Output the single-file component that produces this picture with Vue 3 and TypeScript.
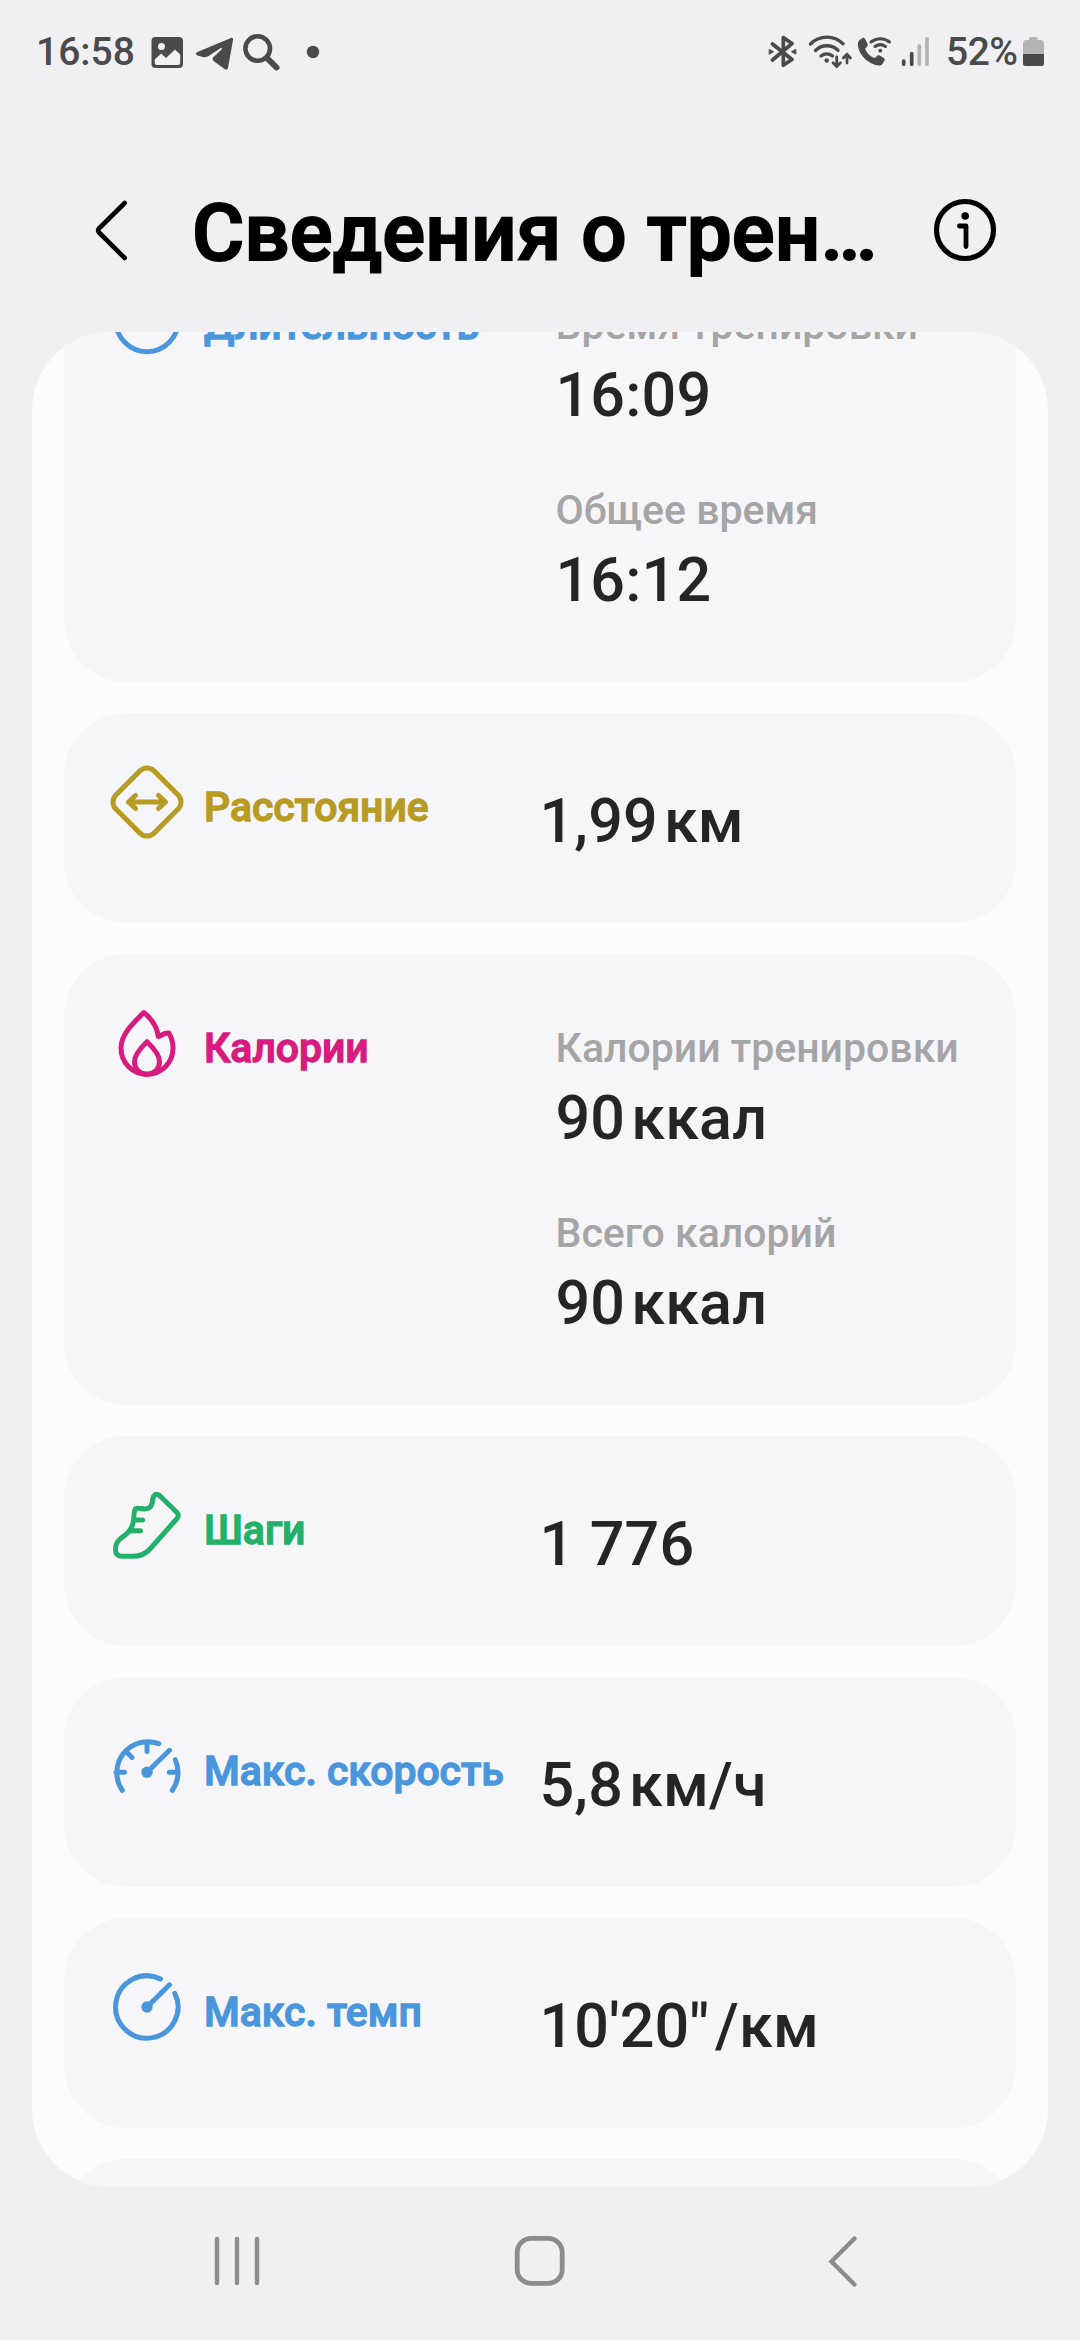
<script setup lang="ts">
type IconName = 'clock' | 'distance' | 'flame' | 'shoe' | 'speed' | 'pace'

interface Metric {
  caption?: string
  value: string
  unit?: string
}

interface Card {
  icon: IconName
  tone: string
  label: string
  metrics: Metric[]
}

const cards: Card[] = [
  {
    icon: 'clock',
    tone: 'blue',
    label: 'Длительность',
    metrics: [
      { caption: 'Время тренировки', value: '16:09' },
      { caption: 'Общее время', value: '16:12' },
    ],
  },
  { icon: 'distance', tone: 'gold', label: 'Расстояние', metrics: [{ value: '1,99', unit: 'км' }] },
  {
    icon: 'flame',
    tone: 'pink',
    label: 'Калории',
    metrics: [
      { caption: 'Калории тренировки', value: '90', unit: 'ккал' },
      { caption: 'Всего калорий', value: '90', unit: 'ккал' },
    ],
  },
  { icon: 'shoe', tone: 'green', label: 'Шаги', metrics: [{ value: '1 776' }] },
  { icon: 'speed', tone: 'blue', label: 'Макс. скорость', metrics: [{ value: '5,8', unit: 'км/ч' }] },
  { icon: 'pace', tone: 'blue', label: 'Макс. темп', metrics: [{ value: '10\'20"', unit: '/км' }] },
]
</script>

<template>
  <div class="screen">
    <div class="status">
      <span class="time">16:58</span>
      <svg width="42" height="50" viewBox="148 27 42 50">
        <path fill="#4a4a4c" fill-rule="evenodd" d="M155.500 37H179a4 4 0 0 1 4 4V64a4 4 0 0 1-4 4H155.500a4 4 0 0 1-4-4V41a4 4 0 0 1 4-4Z" />
        <circle cx="161.500" cy="46.500" r="3.500" fill="#f1f1f3" />
        <path fill="#f1f1f3" d="M154.700 59.500 161.200 53.500 166 58 175 49.500 180.200 54.500V62.500a2.500 2.500 0 0 1-2.500 2.500H157.200a2.500 2.500 0 0 1-2.500-2.500Z" />
      </svg>
      <svg width="50" height="50" viewBox="190 27 50 50">
        <path fill="#4a4a4c" d="M231 38 198 51.800c-2.700 1.200-2.600 2.700-.3 3.600l5 1.500c2 .5 4 .4 6-.8L220 48.500c2-1.200 2.600 0 1.300 1.200L213.500 57c-1.300 1.300-1.200 3 .4 4.200L224.500 69c1.800 1.200 3.200.5 3.600-1.500L233 40c.3-1.700-.6-2.500-2-2Z" />
      </svg>
      <svg width="42" height="50" viewBox="240 27 42 50" fill="none" stroke="#4a4a4c" stroke-linecap="round">
        <circle cx="257.700" cy="48.500" r="12.300" stroke-width="4.600" />
        <path stroke-width="6" d="m267.500 58.500 9 9" />
      </svg>
      <svg width="44" height="50" viewBox="282 27 44 50"><circle cx="313" cy="52" r="6.200" fill="#4a4a4c" /></svg>
      <span class="grow"></span>
      <svg width="36" height="50" viewBox="765 27 36 50" fill="none" stroke="#4a4a4c" stroke-width="3.700" stroke-linejoin="round" stroke-linecap="round">
        <path d="M772.500 44 792 59.500 783.300 65.300V37.500L792 43.500 772.500 60" />
        <path fill="#4a4a4c" stroke-width="1" d="M769.500 49.500 773.500 51.700 769.500 54ZM795.500 49.500 791.500 51.700 795.500 54Z" />
      </svg>
      <svg width="54" height="50" viewBox="801 27 54 50" fill="none" stroke="#4a4a4c" stroke-width="3.400" stroke-linecap="round">
        <path d="M810.500 44A23 23 0 0 1 843 43.700M815.500 50.500A16 16 0 0 1 838 50.300M821 56A9 9 0 0 1 832.500 56" />
        <circle cx="826.700" cy="60.500" r="2.200" fill="#4a4a4c" stroke="none" />
        <path stroke-width="2.800" d="M836.700 57V66M833 62.800 836.700 66.500 840.400 62.800M847 63V54.500M843.300 58 847 54.300 850.400 58" />
      </svg>
      <svg width="40" height="50" viewBox="855 27 40 50" fill="none" stroke="#4a4a4c" stroke-linecap="round">
        <path fill="#4a4a4c" stroke="none" d="M859 40.500 862.500 38c1-.6 2-.3 2.500.7l2.500 5c.5 1 .3 2-.4 2.800l-2 2c1 4 5.500 8.500 9.700 9.500l2.200-2c.8-.8 1.700-.9 2.700-.4l4 2.300c1 .6 1.300 1.500.8 2.500l-2 3.600c-1 1.500-2.500 1.700-4 1.500C868.500 64 859.500 56 858 46c-.2-2-.3-4 1-5.500Z" />
        <path stroke-width="3" d="M871 42A15 15 0 0 1 889.500 42M875 46.500A9 9 0 0 1 885.500 46.500" />
        <circle cx="880.300" cy="50.700" r="1.900" fill="#4a4a4c" stroke="none" />
      </svg>
      <svg width="37" height="50" viewBox="895 27 37 50" stroke-width="3.700" stroke-linecap="round">
        <path stroke="#4a4a4c" d="M903.700 61.200V64.200M911.700 53.500V64.200" />
        <path stroke="#b4b4b6" d="M919.300 45.800V64.200M927 38.800V64.200" />
      </svg>
      <span class="percent">52%</span>
      <svg width="25" height="50" viewBox="1021 27 25 50">
        <path fill="#b4b4b6" d="M1029 40V38.500Q1029 37 1030.500 37H1036.200Q1037.700 37 1037.700 38.500V40H1040.500Q1044 40 1044 43.500V54H1023V43.500Q1023 40 1026.500 40Z" />
        <path fill="#4a4a4c" d="M1023 54H1044V63.500Q1044 66 1041.500 66H1025.500Q1023 66 1023 63.500Z" />
      </svg>
    </div>

    <header class="header">
      <svg width="50" height="80" viewBox="90 190 50 80" fill="none" stroke="#000" stroke-width="4.600" stroke-linecap="round" stroke-linejoin="round">
        <path d="M124.700 203 99 228.500Q97.300 230.500 99 232.500L124.700 258" />
      </svg>
      <h1 class="title">Сведения о трен…</h1>
      <svg width="80" height="80" viewBox="925 190 80 80" fill="none" stroke="#000" stroke-linecap="round" stroke-linejoin="round">
        <circle cx="965" cy="230" r="28.500" stroke-width="5.200" />
        <circle cx="965.200" cy="216" r="3.800" fill="#000" stroke="none" />
        <path stroke-width="4.800" d="M959.400 226H966V246.500" />
      </svg>
    </header>

    <main class="panel">
      <div class="list">
        <section v-for="card in cards" :key="card.label" class="card" :class="{ single: card.metrics.length === 1 }">
          <svg class="icon" :class="card.tone" viewBox="0 0 80 80" fill="none" stroke="currentColor" stroke-width="5" stroke-linecap="round" stroke-linejoin="round">
            <circle v-if="card.icon === 'clock'" cx="40" cy="40.500" r="31.200" />
            <template v-else-if="card.icon === 'distance'">
              <rect x="13" y="13" width="54" height="54" rx="10" transform="rotate(45 40 40)" />
              <path d="M21.500 40H58.500M28.500 33.500 21.500 40 28.500 46.500M51.500 33.500 58.500 40 51.500 46.500" />
            </template>
            <template v-else-if="card.icon === 'flame'">
              <path d="M36.800 9.500C43 14.500 50 22.500 51.300 33.500C54.500 33 56.500 29.500 61.800 30C64.500 34.500 66 39 66 45C66 60 54.500 71.300 40 71.300S14 60 14 45C14 31 26 20.500 36.800 9.500Z" />
              <path d="M40 38.700C45 43.500 52.500 51 52.500 58.500C52.500 66 47 71.300 40 71.300S27.500 66 27.500 58.500C27.500 51 35 43.500 40 38.700Z" />
            </template>
            <path v-else-if="card.icon === 'shoe'" d="M52.500 10.500 70 27.500Q72.500 30.500 70 33.500L43 64Q36.500 71.300 26 71.300H15Q8.500 71.300 8.500 64.500Q8.500 58 13 54L20 48.500C25 44 26.500 38 26.800 33C27 29 27 26 28.300 24C31 21.800 34 24.200 38 24C47 23.500 44.500 16 46.500 11.500Q49 7.500 52.500 10.500ZM27.500 35H35.500M24.500 45.700H33.500" />
            <template v-else-if="card.icon === 'speed'">
              <path d="M15.300 64.300A31 31 0 0 1 51.800 17.700M68.300 33.700A31 31 0 0 1 65.300 64.300M9 46.300H17.500M71 46.300H62.300M40 16V25.500M18.500 25 25 31.500M40 46.300 62.500 24.300" />
              <circle cx="40" cy="46.300" r="5.700" fill="currentColor" stroke="none" />
            </template>
            <template v-else>
              <path d="M53.500 12A31.200 31.200 0 1 0 67.800 26.300M40 40 62.500 17.800" />
              <circle cx="40" cy="40" r="5.700" fill="currentColor" stroke="none" />
            </template>
          </svg>
          <div class="label" :class="card.tone">{{ card.label }}</div>
          <div class="metrics">
            <div v-for="(metric, i) in card.metrics" :key="i" class="metric">
              <div v-if="metric.caption" class="caption">{{ metric.caption }}</div>
              <div class="value"><span>{{ metric.value }}</span><span v-if="metric.unit" class="unit">{{ metric.unit }}</span></div>
            </div>
          </div>
        </section>
        <section class="card"></section>
      </div>
    </main>

    <nav class="nav">
      <svg width="80" height="80" viewBox="0 0 80 80" fill="none" stroke="#8c8c8e" stroke-width="4.400" stroke-linecap="round">
        <path d="M20 18V62M40 18V62M60 18V62" />
      </svg>
      <svg width="80" height="80" viewBox="0 0 80 80" fill="none" stroke="#8c8c8e" stroke-width="4.800">
        <rect x="17.200" y="17.400" width="45" height="45" rx="14" />
      </svg>
      <svg width="80" height="80" viewBox="0 0 80 80" fill="none" stroke="#8c8c8e" stroke-width="4.400" stroke-linecap="round">
        <path d="M51.500 17.500 28.500 40.500 51.500 63.500" />
      </svg>
    </nav>
  </div>
</template>

<style>
body {
  margin: 0;
  background: #f0f0f2;
}
</style>

<style scoped>
.screen {
  display: flex;
  flex-direction: column;
  box-sizing: border-box;
  width: 1080px;
  height: 2340px;
  overflow: hidden;
  background: #f0f0f2;
  font-family: Roboto, 'Noto Sans', sans-serif;
}

.screen svg {
  display: block;
  flex: none;
}

.status {
  display: flex;
  align-items: center;
  height: 50px;
  padding: 27px 34px 0 36px;
  color: #4a4a4c;
  font-size: 39px;
  font-weight: 500;
  line-height: 50px;
}

.time {
  width: 112px;
}

.percent {
  width: 75px;
  padding-left: 14px;
  letter-spacing: -0.5px;
}

.grow {
  flex: 1;
}

.header {
  display: flex;
  align-items: center;
  height: 80px;
  padding: 113px 75px 0 90px;
}

.title {
  flex: 1;
  margin: 6px 0 0 52px;
  color: #000;
  font-size: 80px;
  font-weight: 500;
  -webkit-text-stroke: 2px #000;
  line-height: 94px;
  letter-spacing: 0.1px;
  white-space: nowrap;
}

.panel {
  box-sizing: border-box;
  height: 1855px;
  margin: 62px 32px 0;
  padding: 0 32px;
  overflow: hidden;
  border-radius: 78px;
  background: #fcfcfe;
}

.list {
  display: flex;
  flex-direction: column;
  gap: 31px;
  margin-top: -101px;
}

.card {
  display: flex;
  align-items: flex-start;
  box-sizing: border-box;
  flex: none;
  height: 451px;
  padding-left: 43px;
  border-radius: 62px;
  background: #f6f6f8;
}

.card.single {
  height: 210px;
}

.icon {
  width: 80px;
  height: 80px;
  margin-top: 49px;
}

.label {
  flex: none;
  width: 334px;
  margin: 69px 0 0 17px;
  font-size: 40.900px;
  font-weight: 500;
  -webkit-text-stroke: 1.3px currentColor;
  line-height: 50px;
  white-space: nowrap;
}

.metrics {
  display: flex;
  flex-direction: column;
  gap: 54px;
  margin: 69px 0 0 17.500px;
}

.single .metrics {
  margin: 72px 0 0 1.500px;
}

.caption {
  margin-bottom: 9px;
  color: #a5a5a7;
  font-size: 41px;
  font-weight: 500;
  line-height: 50px;
  white-space: nowrap;
}

.value {
  color: #252527;
  font-size: 61px;
  font-weight: 500;
  font-kerning: none;
  line-height: 72px;
  letter-spacing: 0.200px;
  white-space: nowrap;
}

.unit {
  margin-left: 6px;
}

.blue {
  color: #4a96dc;
}

.gold {
  color: #b89b22;
}

.pink {
  color: #d81b7e;
}

.green {
  color: #22b06a;
}

.nav {
  display: flex;
  justify-content: space-between;
  padding: 34px 197px 0;
}
</style>
